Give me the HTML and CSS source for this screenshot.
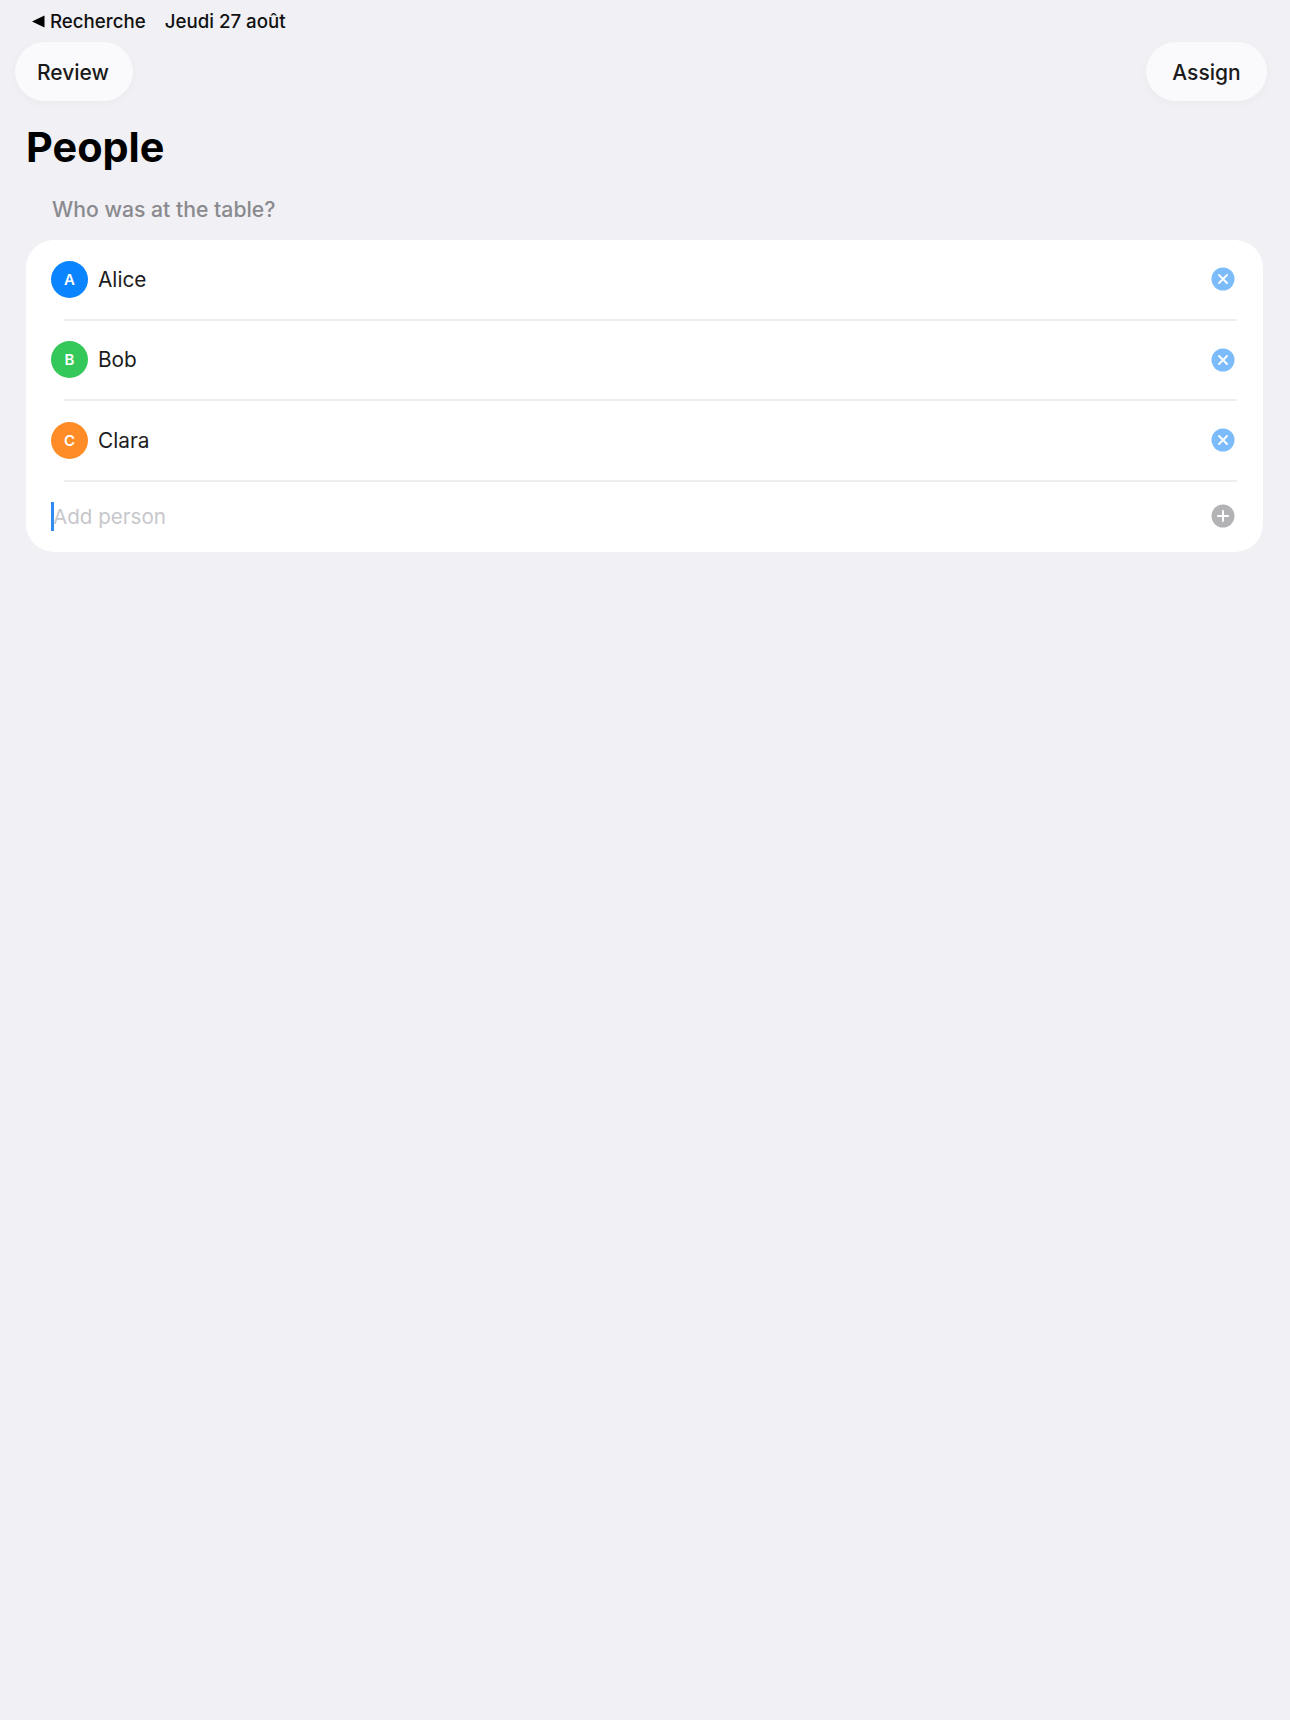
FILE: index.html
```html
<!DOCTYPE html>
<html lang="en">
<head>
  <meta charset="UTF-8">
  <meta name="viewport" content="width=device-width, initial-scale=1.0">
  <title>People</title>
  <link rel="stylesheet" href="styles.css">
</head>
<body>

  <div class="status-bar">
    <svg class="back-arrow" width="13" height="13" viewBox="0 0 13 13"><path d="M0 6.5 L12.5 0.5 V12.5 Z" fill="#000"/></svg>
    <span class="back-label">Recherche</span>
    <span class="status-date">Jeudi 27 août</span>
  </div>

  <div class="toolbar">
    <button class="pill pill-review">Review</button>
    <button class="pill pill-assign">Assign</button>
  </div>

  <h1 class="title">People</h1>
  <div class="section-label">Who was at the table?</div>

  <div class="card">
    <div class="row">
      <div class="avatar avatar-blue">A</div>
      <div class="name">Alice</div>
      <svg class="row-icon" width="24" height="24" viewBox="0 0 24 24"><circle cx="12" cy="12" r="11.5" fill="#7dbcfb"/><path d="M8 8 L16 16 M16 8 L8 16" stroke="#fff" stroke-width="1.8" stroke-linecap="round"/></svg>
    </div>
    <div class="row">
      <div class="avatar avatar-green">B</div>
      <div class="name">Bob</div>
      <svg class="row-icon" width="24" height="24" viewBox="0 0 24 24"><circle cx="12" cy="12" r="11.5" fill="#7dbcfb"/><path d="M8 8 L16 16 M16 8 L8 16" stroke="#fff" stroke-width="1.8" stroke-linecap="round"/></svg>
    </div>
    <div class="row">
      <div class="avatar avatar-orange">C</div>
      <div class="name">Clara</div>
      <svg class="row-icon" width="24" height="24" viewBox="0 0 24 24"><circle cx="12" cy="12" r="11.5" fill="#7dbcfb"/><path d="M8 8 L16 16 M16 8 L8 16" stroke="#fff" stroke-width="1.8" stroke-linecap="round"/></svg>
    </div>
    <div class="add-row">
      <div class="caret"></div>
      <div class="placeholder">Add person</div>
      <svg class="row-icon" width="24" height="24" viewBox="0 0 24 24"><circle cx="12" cy="12" r="11.5" fill="#b3b3b5"/><path d="M12 7 V17 M7 12 H17" stroke="#fff" stroke-width="2" stroke-linecap="round"/></svg>
    </div>
  </div>

</body>
</html>
```

FILE: styles.css
```css
body {
  font-family: 'Inter', 'Liberation Sans', sans-serif;
  margin: 0;
  height: 1720px;
  background-color: #f0f0f5;
  color: #111;
}

.status-bar {
  display: flex;
  align-items: center;
  height: 22px;
  padding: 10px 0 0 32px;
  font-size: 18.7px;
  font-weight: 500;
}

.back-arrow {
  margin-right: 5px;
}

.back-label {
  margin-right: 19px;
}

.toolbar {
  display: flex;
  justify-content: space-between;
  padding: 10px 23px 0 15px;
}

.pill {
  height: 59px;
  border: none;
  border-radius: 30px;
  background-color: #fafafc;
  box-shadow: 0 2px 10px rgba(0, 0, 0, 0.03);
  font-family: inherit;
  font-size: 21px;
  font-weight: 500;
  color: #1a1a1a;
  text-align: center;
  padding: 1px 0 0;
}

.pill-review {
  width: 118px;
  padding-right: 2px;
}

.pill-assign {
  width: 121px;
}

.title {
  margin: 21px 0 0 26px;
  font-size: 41.4px;
  line-height: 50px;
  font-weight: 700;
  color: #000;
}

.section-label {
  margin: 24px 0 0 52px;
  font-size: 21.2px;
  line-height: 26px;
  font-weight: 500;
  color: #8a8a8e;
}

.card {
  margin: 18px 27px 0 26px;
  height: 312px;
  background-color: #fff;
  border-radius: 28px;
}

.row {
  display: flex;
  align-items: center;
  height: 80.5px;
  padding: 0 28px 2px 25px;
  box-sizing: border-box;
  position: relative;
}

.row::after {
  content: '';
  position: absolute;
  left: 38px;
  right: 26px;
  bottom: 0;
  height: 2px;
  background-color: #eeeef0;
}

.avatar {
  width: 37px;
  height: 37px;
  border-radius: 50%;
  color: #fff;
  font-size: 15px;
  font-weight: 600;
  display: flex;
  align-items: center;
  justify-content: center;
  margin-right: 10px;
}

.avatar-blue {
  background-color: #0a84ff;
}

.avatar-green {
  background-color: #34c759;
}

.avatar-orange {
  background-color: #ff8c26;
}

.name {
  flex: 1;
  font-size: 20.8px;
  color: #1c1c1e;
}

.add-row {
  display: flex;
  align-items: center;
  height: 70.5px;
  padding: 0 28px 1.5px 25px;
  box-sizing: border-box;
}

.caret {
  width: 3px;
  height: 29px;
  margin-right: -1px;
  background-color: #2f8cf5;
}

.placeholder {
  flex: 1;
  font-size: 20.6px;
  color: #c7c7cc;
}
```
